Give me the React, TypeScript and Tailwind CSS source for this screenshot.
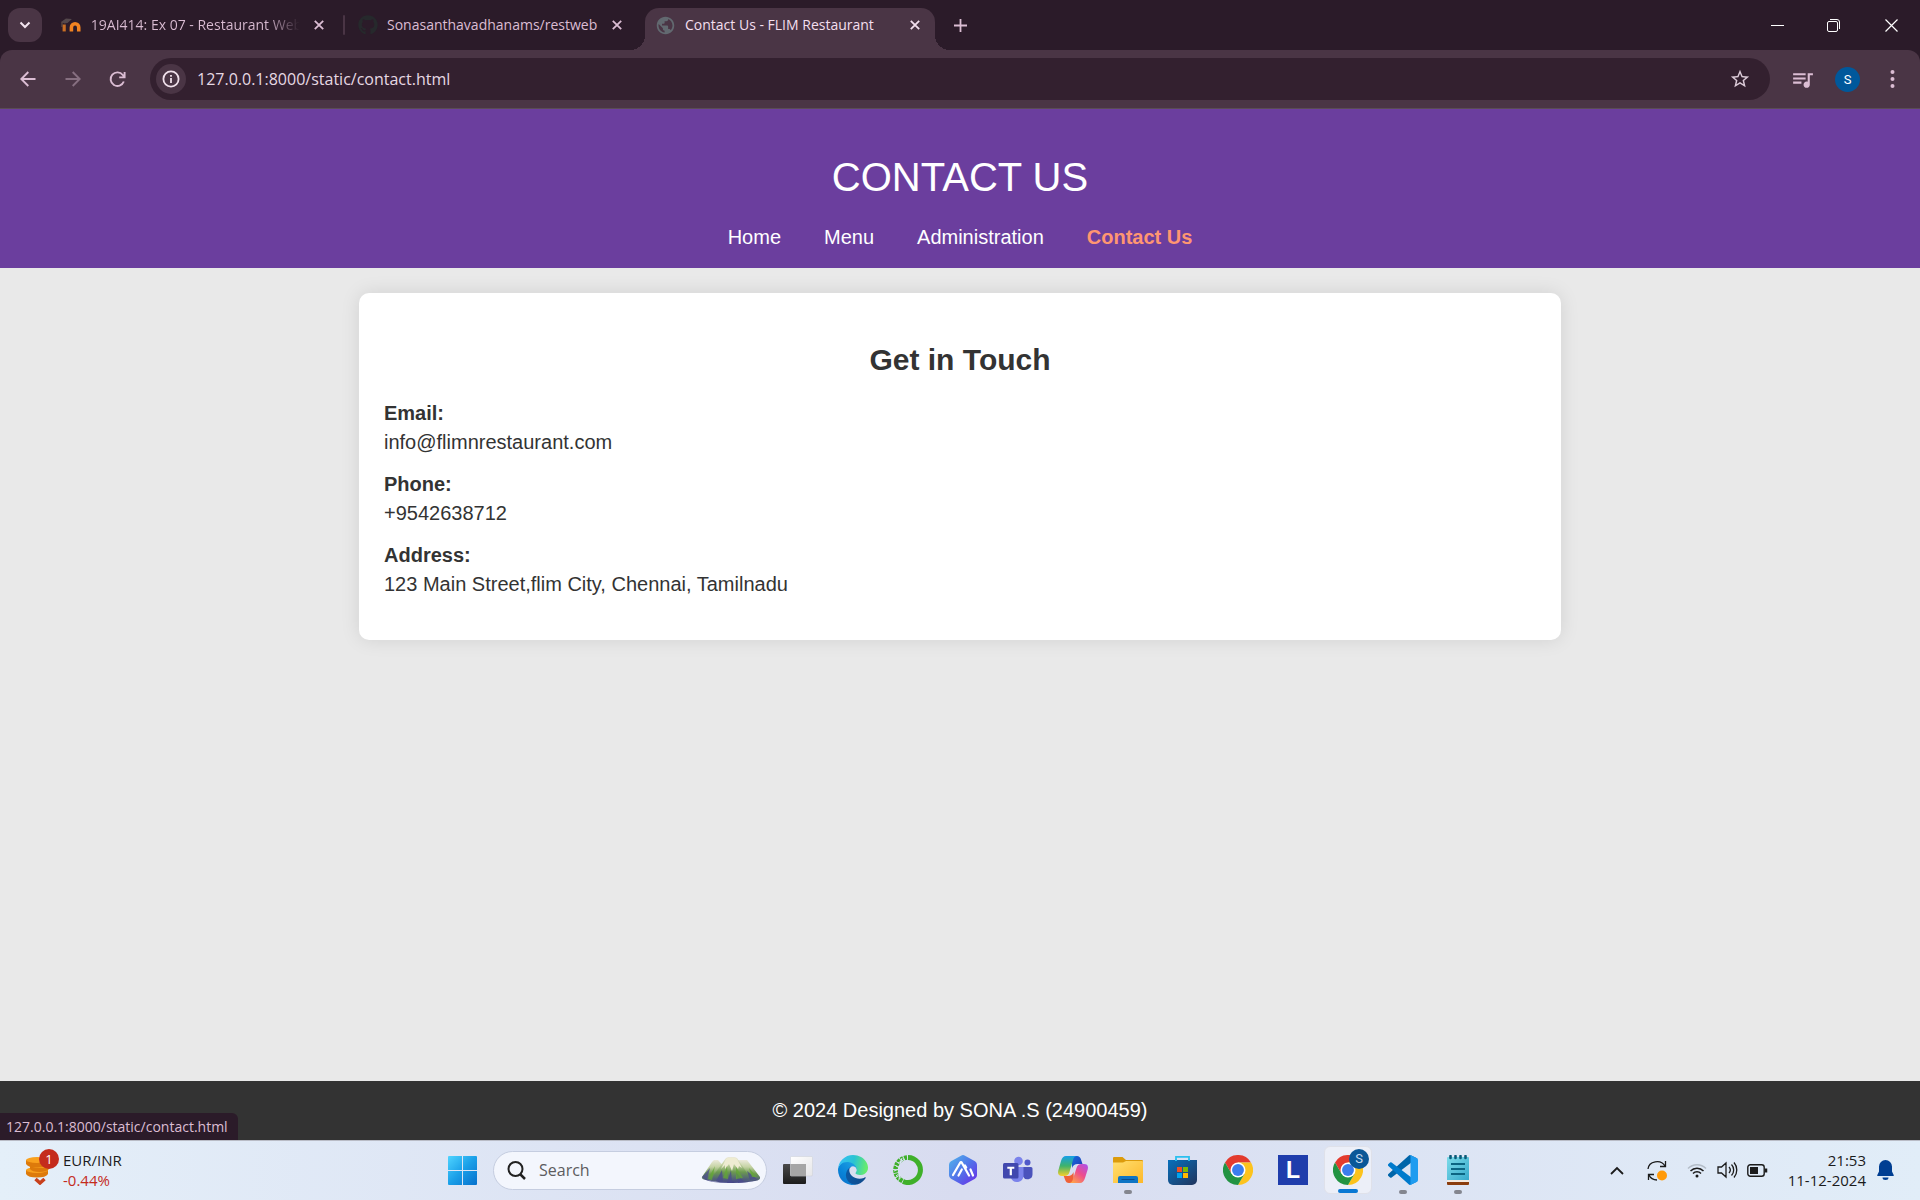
import React from "react";
import { MdQueueMusic, MdStarBorder, MdPublic } from "react-icons/md";
import { FaGithub } from "react-icons/fa";

const TAB_TEXT = "font-['Open_Sans',sans-serif] text-[14px] leading-5 whitespace-nowrap";

function CloseIcon() {
  return (
    <svg width="10" height="10" viewBox="0 0 10 10" fill="none" stroke="currentColor" strokeWidth="1.8">
      <path d="M.8.8l8.4 8.4M9.2.8L.8 9.2" />
    </svg>
  );
}

function MoodleIcon() {
  return (
    <svg width="20" height="20" viewBox="0 0 20 20" fill="none">
      <path d="M3.200 16.500V9.500" stroke="#c96f24" strokeWidth="3.200" />
      <path d="M10.500 16.500v-4a3.700 3.700 0 0 1 7.400 0v4" stroke="#f28321" strokeWidth="3.600" />
      <path d="M0 7l5-3.500 6 .5-4.500 4-3 .5z" fill="#54484c" />
      <path d="M1 7v5" stroke="#6b5a4c" />
    </svg>
  );
}

function TabStrip() {
  return (
    <header className="flex h-[50px] items-center bg-[#2b1b29] pl-2 text-[#dbbdd3]">
      <button aria-label="Search tabs" className="flex size-[34px] items-center justify-center rounded-xl bg-[#4a3545] text-[#f3e4ef]">
        <svg width="12" height="8" viewBox="0 0 12 8" fill="none" stroke="currentColor" strokeWidth="2"><path d="M1.500 1.500L6 6l4.500-4.500" /></svg>
      </button>
      <div role="tablist" className="flex h-full items-center">
        <div role="tab" aria-selected="false" className="flex w-[303px] items-center pl-[19px]">
          <MoodleIcon />
          <span className={`${TAB_TEXT} ml-2.5 w-[215px] bg-linear-to-r from-[#dbbdd3] from-82% to-transparent to-98% bg-clip-text text-transparent`}>19AI414: Ex 07 - Restaurant Web</span>
          <button aria-label="Close tab" className="ml-2.5"><CloseIcon /></button>
          <span className="ml-[19px] h-5 w-0.5 shrink-0 rounded bg-[#4a3545]" />
        </div>
        <div role="tab" aria-selected="false" className="flex w-[300px] items-center pl-[13px]">
          <FaGithub size={20} color="#26292c" className="shrink-0" />
          <span className={`${TAB_TEXT} ml-[9px] w-[212px]`}>Sonasanthavadhanams/restweb</span>
          <button aria-label="Close tab" className="ml-[13px]"><CloseIcon /></button>
        </div>
        <div role="tab" aria-selected="true" className="relative flex h-[42px] w-[290px] items-center self-end rounded-t-[14px] bg-[#4a3545] pb-2 pl-[10px] text-[#f3dfee] before:absolute before:bottom-0 before:-left-[15px] before:size-[15px] before:bg-[radial-gradient(circle_at_0_0,transparent_15px,#4a3545_15px)] after:absolute after:-right-[15px] after:bottom-0 after:size-[15px] after:bg-[radial-gradient(circle_at_100%_0,transparent_15px,#4a3545_15px)]">
          <MdPublic size={21} color="#626970" className="shrink-0" />
          <span className={`${TAB_TEXT} ml-[9px] w-[214px]`}>Contact Us - FLIM Restaurant</span>
          <button aria-label="Close tab" className="ml-[11px]"><CloseIcon /></button>
        </div>
      </div>
      <button aria-label="New tab" className="ml-[19px]">
        <svg width="13" height="13" viewBox="0 0 13 13" stroke="currentColor" strokeWidth="1.800"><path d="M6.500 0v13M0 6.500h13" /></svg>
      </button>
      <div className="ml-auto flex h-full text-white">
        <button aria-label="Minimize" className="flex w-14 items-center justify-center">
          <svg width="13" height="13" viewBox="0 0 13 13" stroke="currentColor"><path d="M0 6.500h13" /></svg>
        </button>
        <button aria-label="Restore" className="flex w-[57px] items-center justify-center">
          <svg width="13" height="13" viewBox="0 0 13 13" fill="none" stroke="currentColor"><rect x=".5" y="2.500" width="10" height="10" rx="1.500" /><path d="M3 .5h7a2.500 2.500 0 0 1 2.500 2.500v7" /></svg>
        </button>
        <button aria-label="Close window" className="flex w-[58px] items-center justify-center">
          <svg width="13" height="13" viewBox="0 0 13 13" stroke="currentColor" strokeWidth="1.200"><path d="M.5.5l12 12M12.500.5l-12 12" /></svg>
        </button>
      </div>
    </header>
  );
}

function Toolbar() {
  return (
    <div className="bg-[#2b1b29]">
      <div className="flex h-[59px] items-center rounded-t-xl border-b border-[#5a4c55] bg-[#4a3545] pr-[25px] pl-5 text-[#dbbdd3]">
        <button aria-label="Back">
          <svg width="16" height="16" viewBox="0 0 16 16" fill="none" stroke="currentColor" strokeWidth="1.900"><path d="M15.500 8H1.500M8.300 1L1.300 8l7 7" /></svg>
        </button>
        <button aria-label="Forward" className="ml-[29px] text-[#866f80]">
          <svg width="16" height="16" viewBox="0 0 16 16" fill="none" stroke="currentColor" strokeWidth="1.900"><path d="M.5 8h14M7.700 1l7 7-7 7" /></svg>
        </button>
        <button aria-label="Reload" className="ml-[28px]">
          <svg width="17" height="17" viewBox="0 0 17 17" fill="none" stroke="currentColor" strokeWidth="1.900"><path d="M14.800 10.500A6.800 6.800 0 1 1 13.800 4L15 5.600M15.600 1v5.400h-5.400" /></svg>
        </button>
        <div className="ml-6 flex h-[42px] flex-1 items-center rounded-full bg-[#33202f] pr-[19px] pl-[6px]">
          <button aria-label="View site information" className="flex size-[30px] items-center justify-center rounded-full bg-[#4a3545] text-[#f0e0eb]">
            <svg width="18" height="18" viewBox="0 0 18 18" fill="none" stroke="currentColor" strokeWidth="1.800"><circle cx="9" cy="9" r="7.600" /><path d="M9 8v5M9 5v1.800" /></svg>
          </button>
          <input aria-label="Address" defaultValue="127.0.0.1:8000/static/contact.html" className="ml-[11px] min-w-0 flex-1 bg-transparent font-['Open_Sans',sans-serif] text-[16px] text-[#e6d8e3] outline-none" />
          <button aria-label="Bookmark this tab" className="text-[#dccbd8]"><MdStarBorder size={22} /></button>
        </div>
        <button aria-label="Media controls" className="ml-[20px]"><MdQueueMusic size={25} /></button>
        <button aria-label="Profile" className="ml-[20px] size-[25px] rounded-full bg-[#00589b] text-center font-[Roboto,sans-serif] text-[13px] leading-[25px] text-white">S</button>
        <button aria-label="Menu" className="ml-[30px]">
          <svg width="5" height="18" viewBox="0 0 5 18" fill="currentColor"><circle cx="2.500" cy="2" r="2" /><circle cx="2.500" cy="9" r="2" /><circle cx="2.500" cy="16" r="2" /></svg>
        </button>
      </div>
    </div>
  );
}

const DETAILS = [
  ["Email:", "info@flimnrestaurant.com"],
  ["Phone:", "+9542638712"],
  ["Address:", "123 Main Street,flim City, Chennai, Tamilnadu"],
];

function Page() {
  return (
    <div className="relative flex flex-1 flex-col bg-[#e9e9e9] font-['Liberation_Sans',Arial,sans-serif] text-[20px] text-[#333]">
      <header className="bg-[#6b3e9e] pt-[45px] pb-4 text-center text-white">
        <h1 className="text-[40px] leading-[46px]">CONTACT US</h1>
        <nav className="mt-[23px] flex justify-center gap-[43px] leading-[29px]">
          <a href="#home">Home</a>
          <a href="#menu">Menu</a>
          <a href="#administration">Administration</a>
          <a href="#contact" className="font-bold text-[#ff9671]">Contact Us</a>
        </nav>
      </header>
      <main className="mx-auto mt-[25px] box-content w-3/5 rounded-[10px] bg-white p-[25px] shadow-[0_0_19px_rgba(0,0,0,0.1)]">
        <h2 className="mt-6 mb-[21px] text-center text-[30px] leading-9 font-bold">Get in Touch</h2>
        <dl className="mb-4 flex flex-col gap-[13px] leading-[29px]">
          {DETAILS.map(([label, value]) => (
            <div key={label}>
              <dt className="font-bold">{label}</dt>
              <dd>{value}</dd>
            </div>
          ))}
        </dl>
      </main>
      <footer className="mt-auto bg-[#333] pt-[15px] pb-[15px] text-center leading-[29px] text-white">© 2024 Designed by SONA .S (24900459)</footer>
      <div className="absolute bottom-0 left-0 rounded-tr-md bg-[#2b1b29] py-[3px] pr-2.5 pl-1.5 font-['Open_Sans',sans-serif] text-[14px] leading-[21px] text-[#dbbdd3]">127.0.0.1:8000/static/contact.html</div>
    </div>
  );
}

function StartIcon() {
  return (
    <svg width="29" height="29" viewBox="0 0 29 29">
      <defs><linearGradient id="start" x1="0" y1="0" x2="1" y2="1"><stop stopColor="#4fd4ff" /><stop offset=".5" stopColor="#1a9fe8" /><stop offset="1" stopColor="#0670cc" /></linearGradient></defs>
      <path fill="url(#start)" d="M1 0h13v14H0V1a1 1 0 0 1 1-1zM15 0h13a1 1 0 0 1 1 1v13H15zM0 15h14v14H1a1 1 0 0 1-1-1zM15 15h14v13a1 1 0 0 1-1 1H15z" />
    </svg>
  );
}

function MountainArt() {
  return (
    <svg width="60" height="28" viewBox="0 0 60 28">
      <defs>
        <linearGradient id="mtn" x1="0" y1="0" x2="0" y2="1"><stop stopColor="#eceadb" /><stop offset=".3" stopColor="#c5d3a4" /><stop offset=".6" stopColor="#6d9a50" /><stop offset="1" stopColor="#46488a" /></linearGradient>
      </defs>
      <path d="M1 21L11 6l2-2h4l8 9 10-9h11l13 17q1 3-5 4-10 2-22 2T5 24q-5-1-4-3z" fill="url(#mtn)" />
      <path d="M10 23L25 2l2-1h7l2 1 14 21q-18 6-40 0z" fill="url(#mtn)" />
      <path d="M25 3l2-1h7l2 1 5 9-3-2-1 3-4-5-2 7-3-7-4 5v-4l-4 4z" fill="#eeecd2" />
      <path d="M1 21l8-9-3 12zM15 25l6-11 1 12zM26 27l4-13 1 13zM37 27l-2-11 8 10zM49 24l-3-9 10 8z" fill="#4a4b8d" opacity=".75" />
      <path d="M7 23l7-13-3 14zM22 22l4-12 1 13zM35 23V11l7 11zM51 21l-3-9 8 9z" fill="#62a832" opacity=".7" />
      <path d="M3 22q4 4 27 4.500T57 22q-2 5-27 5T3 22z" fill="#3f4184" opacity=".7" />
    </svg>
  );
}

function TaskViewIcon() {
  return (
    <svg width="30" height="28" viewBox="0 0 30 28">
      <defs>
        <linearGradient id="tv" x1="0" y1="0" x2="0" y2="1"><stop stopColor="#4a4a4a" /><stop offset="1" stopColor="#1c1c1c" /></linearGradient>
        <linearGradient id="tw" x1="0" y1="0" x2="1" y2="1"><stop stopColor="#ffffff" /><stop offset="1" stopColor="#e6e6e8" /></linearGradient>
      </defs>
      <rect x="0" y="8" width="23" height="20" rx="1" fill="url(#tv)" />
      <rect x="7.500" y=".5" width="22" height="19.500" rx="1" fill="url(#tw)" stroke="#d0d3da" strokeWidth=".6" />
      <path d="M7.500 8H23v12H7.500z" fill="#a6a6a6" />
    </svg>
  );
}

function EdgeIcon() {
  return (
    <svg width="30" height="30" viewBox="0 0 256 256">
      <defs>
        <linearGradient id="ea" x1="63" y1="178" x2="241" y2="178" gradientUnits="userSpaceOnUse"><stop stopColor="#0c59a4" /><stop offset="1" stopColor="#114a8b" /></linearGradient>
        <linearGradient id="eb" x1="158" y1="100" x2="46" y2="222" gradientUnits="userSpaceOnUse"><stop stopColor="#1b9de2" /><stop offset=".7" stopColor="#0883d8" /><stop offset="1" stopColor="#0a78cf" /></linearGradient>
        <linearGradient id="ec" x1="20" y1="70" x2="240" y2="110" gradientUnits="userSpaceOnUse"><stop stopColor="#35c1f1" /><stop offset=".5" stopColor="#2bc3d2" /><stop offset="1" stopColor="#66eb6e" /></linearGradient>
      </defs>
      <path fill="url(#ea)" d="M231 190.500a93.700 93.700 0 0 1-10.500 4.700 101.900 101.900 0 0 1-35.900 6.500c-47.300 0-88.500-32.600-88.500-74.300a31.500 31.500 0 0 1 16.400-27.300c-42.800 1.800-53.800 46.400-53.800 72.500 0 73.900 68.100 81.400 82.800 81.400 7.900 0 19.800-2.300 27-4.600l1.300-.400a128.300 128.300 0 0 0 66.600-52.800 4 4 0 0 0-5.400-5.700z" />
      <path fill="url(#eb)" d="M105.700 241.400a79.200 79.200 0 0 1-22.700-21.300 80.700 80.700 0 0 1 29.500-120c3.200-1.500 8.500-4.100 15.600-4a32.400 32.400 0 0 1 25.700 13 31.900 31.900 0 0 1 6.300 18.700c0-.2 24.500-79.600-80-79.600C36.200 48.200.1 89.900.1 126.400a130.200 130.200 0 0 0 12.100 56 128 128 0 0 0 156.400 67.100 75.500 75.500 0 0 1-62.800-8z" />
      <path fill="url(#ec)" d="M152.300 148.900c-.8 1-3.300 2.500-3.300 5.700 0 2.600 1.700 5.100 4.700 7.200 14.400 10 41.500 8.700 41.600 8.700 10.700 0 21.100-2.900 30.300-8.300a61.400 61.400 0 0 0 30.400-52.900c.3-22.400-8-37.300-11.300-43.900C223.500 23.900 177.700 0 128 0A128 128 0 0 0 0 126.200c.5-36.500 36.800-66 80-66 3.500 0 23.500.3 42 10.100 16.300 8.600 24.900 18.900 30.800 29.200 6.200 10.700 7.300 24.100 7.300 29.500 0 5.300-2.700 13.300-7.800 19.900z" />
    </svg>
  );
}

function AnacondaIcon() {
  return (
    <svg width="30" height="30" viewBox="0 0 30 30" fill="none" stroke="#3fb02a">
      <path d="M15 2.500a12.500 12.500 0 1 1-5 24" strokeWidth="5" />
      <path d="M14 2.500A12.500 12.500 0 0 0 2.500 15q0 8 8 11.500" strokeWidth="4.600" strokeDasharray="3 1 2.500 .8" />
      <path d="M12 4L5 8M9 3l-2 6M3 11l4 2M1 16l5-2M3 21l4-3M6 24l1-5" stroke="#dbe4f5" strokeWidth="1" />
    </svg>
  );
}

function HexIcon() {
  return (
    <svg width="28" height="30" viewBox="0 0 28 30" fill="none">
      <defs><linearGradient id="hex" x1="0" y1="0" x2="1" y2="1"><stop stopColor="#50b8ec" /><stop offset=".5" stopColor="#5173e9" /><stop offset="1" stopColor="#6c28e8" /></linearGradient></defs>
      <path d="M12 .7q2-1.200 4 0l10 5.500q2 1.200 2 3.500v10.600q0 2.300-2 3.500l-10 5.500q-2 1.200-4 0L2 23.800q-2-1.200-2-3.500V9.700Q0 7.400 2 6.200z" fill="url(#hex)" />
      <path d="M4 20L11 8q1-1.800 2 0l7 12.500M9.500 20.500l3.300-6M16 10.500l1.200 2M21.500 14.500l2.500 6" stroke="#fff" strokeWidth="2.200" strokeLinecap="round" strokeLinejoin="round" />
    </svg>
  );
}

function TeamsIcon() {
  return (
    <svg width="30" height="28" viewBox="0 0 30 28">
      <circle cx="24.500" cy="6.500" r="3" fill="#5059c9" />
      <path d="M20 11h8a1.500 1.500 0 0 1 1.500 1.500v6a5 5 0 0 1-9.500 2z" fill="#4b53bc" />
      <circle cx="15.500" cy="5" r="4.300" fill="#7b83eb" />
      <path d="M9 11h11.500v9a6.500 6.500 0 0 1-12.500 2z" fill="#7b83eb" />
      <rect y="7" width="15.500" height="15.500" rx="1.500" fill="#4148ae" />
      <path d="M4.300 10.700h7v2H8.900v6.500H6.700v-6.500H4.300z" fill="#fff" />
    </svg>
  );
}

function CopilotIcon() {
  return (
    <svg width="30" height="28" viewBox="0 0 30 28">
      <defs>
        <linearGradient id="ca" x1="0" y1="0" x2="0" y2="1"><stop stopColor="#169fe8" /><stop offset=".5" stopColor="#3fb36a" /><stop offset="1" stopColor="#f7cf2c" /></linearGradient>
        <linearGradient id="cb" x1="1" y1="0" x2=".2" y2="1"><stop stopColor="#a852f2" /><stop offset=".5" stopColor="#ed4c8d" /><stop offset="1" stopColor="#ffa44a" /></linearGradient>
        <linearGradient id="cc" x1="0" y1="0" x2="1" y2="1"><stop stopColor="#136cdb" /><stop offset="1" stopColor="#253bb7" /></linearGradient>
      </defs>
      <path d="M14 0h5q3 0 4 3.500l1.500 4.500h-5q-4 0-5.500 4z" fill="url(#cc)" />
      <path d="M16 27h-5q-3 0-4-3.500L5.700 20H10q4 0 5.500-4z" fill="#ef6138" />
      <path d="M8 0h11q-3 0-4 4l-3.500 12q-1 4-5 4H4q-5 0-3.700-5.500L3 5Q4.500 0 8 0z" fill="url(#ca)" />
      <path d="M22 27H11q3 0 4-4l3.500-11q1-4 5-4H26q5 0 3.700 5.500L27 22q-1.500 5-5 5z" fill="url(#cb)" />
    </svg>
  );
}

function FolderIcon() {
  return (
    <svg width="30" height="27" viewBox="0 0 30 27">
      <defs><linearGradient id="fo" x1="0" y1="0" x2="1" y2="1"><stop stopColor="#ffdf70" /><stop offset="1" stopColor="#fdb82a" /></linearGradient></defs>
      <path d="M0 1a1 1 0 0 1 1-1h8.500L13 3h16a1 1 0 0 1 1 1v6H0z" fill="#dc9b0b" />
      <path d="M0 5.500h10L13 4h16a1 1 0 0 1 1 1v21H0z" fill="url(#fo)" />
      <path d="M5 26v-5a2 2 0 0 1 2-2h16a2 2 0 0 1 2 2v5z" fill="#0e74c4" />
      <path d="M8.500 22.500h13" stroke="#0a4b8b" />
    </svg>
  );
}

function StoreIcon() {
  return (
    <svg width="30" height="30" viewBox="0 0 30 30">
      <defs><linearGradient id="sto" x1="0" y1="0" x2="1" y2="1"><stop stopColor="#0870bc" /><stop offset="1" stopColor="#20345c" /></linearGradient></defs>
      <path d="M8 7V1.800h13V7" fill="none" stroke="#2bc0ef" strokeWidth="1.800" />
      <path d="M0 5h29v20a5 5 0 0 1-5 5H5a5 5 0 0 1-5-5z" fill="url(#sto)" />
      <path d="M8 6V4M21 6V4" stroke="#2bc0ef" strokeWidth="1.800" />
      <path d="M9 12h5v5H9z" fill="#f25022" /><path d="M15 12h5v5h-5z" fill="#7fba00" /><path d="M9 18h5v5H9z" fill="#00a4ef" /><path d="M15 18h5v5h-5z" fill="#ffb900" />
    </svg>
  );
}

function ChromeIcon() {
  return (
    <svg width="30" height="30" viewBox="0 0 48 48">
      <path d="M24 12h20.800A24 24 0 0 0 3.200 12l10.400 18z" fill="#e33b2e" />
      <path d="M34.400 30L24 48A24 24 0 0 0 44.800 12H24z" fill="#fcc31e" />
      <path d="M13.600 30L3.200 12A24 24 0 0 0 24 48l10.400-18z" fill="#229342" />
      <circle cx="24" cy="24" r="12" fill="#fff" />
      <circle cx="24" cy="24" r="9.500" fill="#3b7ded" />
    </svg>
  );
}

function VsCodeIcon() {
  return (
    <svg width="30" height="30" viewBox="0 0 100 100">
      <path d="M96.500 10.800L75.900.9a6.200 6.200 0 0 0-7.100 1.200L1.300 63.600a4.200 4.200 0 0 0 0 6.200l5.500 5a4.200 4.200 0 0 0 5.300.2l81.200-61.600c2.700-2.100 6.700-.1 6.700 3.300v-.2a6.300 6.300 0 0 0-3.500-5.700z" fill="#0065a9" />
      <path d="M96.500 89.200l-20.600 9.900a6.200 6.200 0 0 1-7.100-1.200L1.300 36.400a4.200 4.200 0 0 1 0-6.200l5.500-5a4.200 4.200 0 0 1 5.300-.2l81.200 61.600c2.700 2.100 6.700.1 6.700-3.300v.2a6.300 6.300 0 0 1-3.500 5.700z" fill="#007acc" />
      <path d="M75.900 99.100a6.200 6.200 0 0 1-7.100-1.200c2.300 2.300 6.200.7 6.200-2.600V4.700c0-3.300-3.900-4.900-6.200-2.600A6.200 6.200 0 0 1 75.900.9l20.600 9.900a6.200 6.200 0 0 1 3.500 5.600v67.200a6.200 6.200 0 0 1-3.500 5.600z" fill="#1f9cf0" />
    </svg>
  );
}

function NotepadIcon() {
  return (
    <svg width="22" height="30" viewBox="0 0 22 30">
      <defs><linearGradient id="np" x1="0" y1="0" x2="1" y2="1"><stop stopColor="#7ddcea" /><stop offset="1" stopColor="#36a9cc" /></linearGradient></defs>
      <path d="M0 25h22v4a1 1 0 0 1-1 1H1a1 1 0 0 1-1-1z" fill="#8a3d0e" />
      <path d="M0 24h22v3H0z" fill="#f3e9df" />
      <path d="M0 3a1 1 0 0 1 1-1h20a1 1 0 0 1 1 1v22H0z" fill="url(#np)" />
      <path d="M4 9h14M4 14h14M4 19h14" stroke="#0b6583" strokeWidth="1.800" />
      <path d="M3.500 1v2M8.500 1v2M13.500 1v2M18.500 1v2" stroke="#0b5a78" strokeWidth="2.600" strokeLinecap="round" />
    </svg>
  );
}

function LetterTile() {
  return <span className="flex size-[30px] items-center justify-center bg-[#1f3dac] font-['Liberation_Sans',Arial,sans-serif] text-[23px] leading-none font-bold text-white">L</span>;
}

function ActiveChrome() {
  return (
    <span className="relative block">
      <ChromeIcon />
      <span className="absolute -top-1.5 -right-1.5 size-5 rounded-full bg-[#0a5797] text-center font-[Roboto,sans-serif] text-[13px] leading-5 text-[#c8dcef]">S</span>
    </span>
  );
}

const APPS: { name: string; icon: React.ReactNode; state?: "open" | "active" }[] = [
  { name: "Task view", icon: <TaskViewIcon /> },
  { name: "Edge", icon: <EdgeIcon /> },
  { name: "Anaconda", icon: <AnacondaIcon /> },
  { name: "Assistant", icon: <HexIcon /> },
  { name: "Teams", icon: <TeamsIcon /> },
  { name: "Copilot", icon: <CopilotIcon /> },
  { name: "File Explorer", icon: <FolderIcon />, state: "open" },
  { name: "Store", icon: <StoreIcon /> },
  { name: "Chrome", icon: <ChromeIcon /> },
  { name: "L", icon: <LetterTile /> },
  { name: "Chrome, profile S", icon: <ActiveChrome />, state: "active" },
  { name: "Visual Studio Code", icon: <VsCodeIcon />, state: "open" },
  { name: "Notepad", icon: <NotepadIcon />, state: "open" },
];

function CoinsIcon() {
  return (
    <svg width="24" height="30" viewBox="0 0 24 30">
      {[15, 10, 5].map((y, i) => (
        <g key={y}>
          <path d={i === 1 ? `M4 ${y}v4q2 3 9.500 3t9.500-3v-4z` : `M0 ${y}v4q2 3.500 11 3.500t11-3.500v-4z`} fill="#dd7a0b" />
          <ellipse cx={i === 1 ? 13.5 : 11} cy={y} rx={i === 1 ? 9.5 : 11} ry="3" fill="#f9a11e" />
        </g>
      ))}
      <path d="M9.500 24l4.500 4 4.500-4" fill="none" stroke="#c8401c" strokeWidth="3.500" />
    </svg>
  );
}

function Taskbar() {
  return (
    <footer className="grid h-[60px] grid-cols-[1fr_auto_1fr] items-center border-t border-[#b9bcc6] bg-linear-to-r from-[#e4eff9] via-[#d8dcf0] to-[#e1edf8] pb-px font-['Open_Sans',sans-serif] text-[#1b1b1b]">
      <button aria-label="EUR/INR widget" className="flex items-center justify-self-start pl-[26px] text-left">
        <span className="relative block">
          <CoinsIcon />
          <span className="absolute -top-1.5 left-[13px] size-5 rounded-full bg-[#c42b1c] text-center text-[13px] leading-5 text-white">1</span>
        </span>
        <span className="ml-[13px] text-[15px] leading-5">
          <span className="block">EUR/INR</span>
          <span className="block text-[#c42b1c]">-0.44%</span>
        </span>
      </button>
      <div className="flex items-center">
        <button aria-label="Start" className="flex w-12 justify-center"><StartIcon /></button>
        <label className="ml-[7px] flex h-[39px] w-[274px] items-center rounded-full border border-[#c5cde0] bg-[#f3f6fd] pr-[5px] pl-[13px]">
          <svg width="19" height="19" viewBox="0 0 19 19" fill="none" stroke="#222" strokeWidth="2"><circle cx="8.500" cy="8" r="7" /><path d="M13 13l5 5" strokeWidth="2.500" /></svg>
          <input aria-label="Search" placeholder="Search" className="ml-[13px] min-w-0 flex-1 bg-transparent text-[16px] outline-none placeholder:text-[#5c5c5f]" />
          <MountainArt />
        </label>
        <div className="ml-[7px] flex gap-[7px]">
          {APPS.map((app) => (
            <button key={app.name} aria-label={app.name} className={app.state === "active" ? "relative flex size-12 items-center justify-center rounded-md border border-[#dfe1ea] bg-[#eceff8]" : "relative flex size-12 items-center justify-center"}>
              {app.icon}
              {app.state && <span className={app.state === "active" ? "absolute bottom-0 h-1 w-5 rounded-full bg-[#0a78d4]" : "absolute bottom-0 h-1 w-2 rounded-full bg-[#84868f]"} />}
            </button>
          ))}
        </div>
      </div>
      <div className="flex items-center justify-self-end pr-[26px]">
        <button aria-label="Show hidden icons">
          <svg width="14" height="9" viewBox="0 0 14 9" fill="none" stroke="currentColor" strokeWidth="1.800"><path d="M1 8l6-6 6 6" /></svg>
        </button>
        <button aria-label="Updates" className="ml-[23px]">
          <svg width="20" height="21" viewBox="0 0 20 21" fill="none" stroke="currentColor" strokeWidth="1.300"><path d="M1 9a9 8 0 0 1 17-3M18.500 1v5.500h-5.500M10 20a9 8 0 0 1-8-5M1.500 20v-5.500H7" /><circle cx="15" cy="15.500" r="5" fill="#ff9a0a" stroke="none" /></svg>
        </button>
        <button aria-label="Network, volume and battery" className="ml-5 flex items-center">
          <svg width="20" height="15" viewBox="0 0 20 15" fill="none" stroke="currentColor" strokeWidth="1.500"><path d="M1 5.500a12.500 12.500 0 0 1 18 0" stroke="#b4bdc8" /><path d="M3.500 8a9 9 0 0 1 13 0M6 10.500a5.600 5.600 0 0 1 8 0" /><circle cx="10" cy="13" r="1.500" fill="currentColor" stroke="none" /></svg>
          <svg className="ml-2.5" width="21" height="18" viewBox="0 0 21 18" fill="none" stroke="currentColor" strokeWidth="1.300"><path d="M1 6h3.500L9 2v14l-4.500-4H1zM12 6a4.500 4.500 0 0 1 0 6M14.500 3.500a8 8 0 0 1 0 11M17 1.500a11.500 11.500 0 0 1 0 15" /></svg>
          <svg className="ml-[9px]" width="21" height="13" viewBox="0 0 21 13" fill="none" stroke="currentColor" strokeWidth="1.400"><rect x=".8" y=".8" width="16.400" height="11.400" rx="2.500" /><path d="M3 3h8v7H3z" fill="currentColor" stroke="none" /><path d="M19 4.500v4" strokeWidth="2.500" /></svg>
        </button>
        <button aria-label="Clock" className="ml-[20px] text-right text-[15px] leading-5">
          <span className="block">21:53</span>
          <span className="block">11-12-2024</span>
        </button>
        <button aria-label="Notifications" className="ml-[11px]">
          <svg width="17" height="20" viewBox="0 0 17 20" fill="#003e92"><path d="M8.500 0A6.500 6.500 0 0 0 2 6.500v5L.2 15.200q-.3.800.6.800h15.400q.9 0 .6-.8L15 11.500v-5A6.500 6.500 0 0 0 8.500 0zM5.500 17.500h6a3 2.500 0 0 1-6 0z" /></svg>
        </button>
      </div>
    </footer>
  );
}

export default function App() {
  return (
    <div className="flex min-h-screen flex-col">
      <TabStrip />
      <Toolbar />
      <Page />
      <Taskbar />
    </div>
  );
}
